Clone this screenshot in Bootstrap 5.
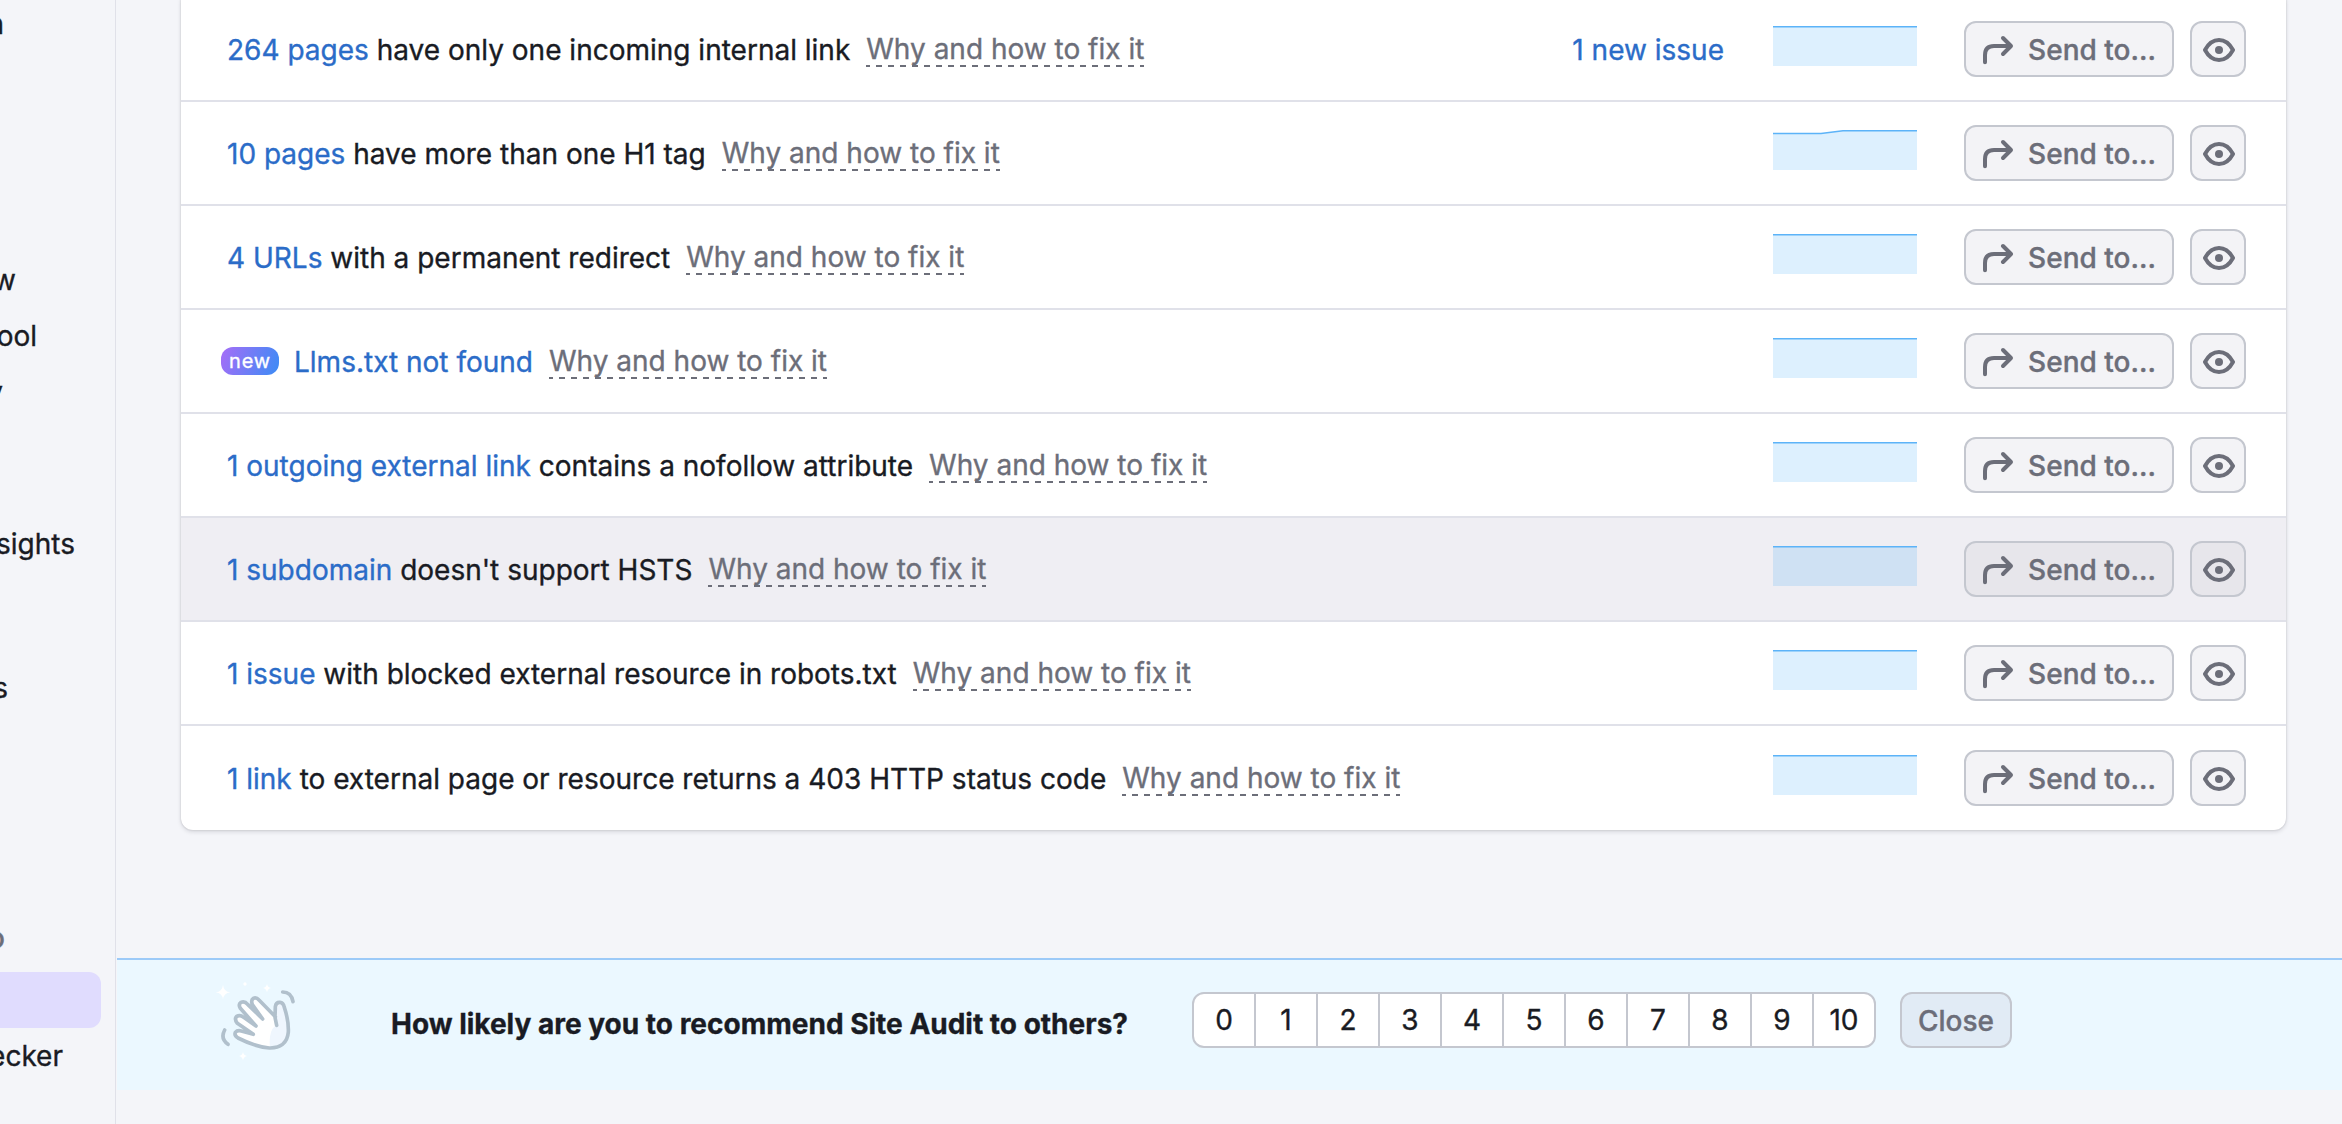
<!DOCTYPE html>
<html lang="en">
<head>
<meta charset="utf-8">
<meta name="viewport" content="width=device-width, initial-scale=1">
<title>Site Audit</title>
<link href="https://cdn.jsdelivr.net/npm/bootstrap@5.3.0/dist/css/bootstrap.min.css" rel="stylesheet">
<style>
  body { font-family: Inter, "Liberation Sans", sans-serif; font-size: 28px; line-height: 40px; color: #191b23; background: #f4f5f9; height: 1124px; overflow: hidden; -webkit-text-stroke: .35px currentColor; }
  .side-nav { width: 116px; height: 1124px; border-right: 1px solid #e0e1e9; padding-top: 0; }
  .side-item { height: 56px; display: flex; align-items: center; justify-content: flex-end; white-space: nowrap; }
  .side-item.n1 { width: 4px; margin-top: -4px; }
  .side-item.n2 { width: 16px; margin-top: 200px; }
  .side-item.n3 { width: 37px; }
  .side-item.n4 { width: 3px; }
  .side-item.n5 { width: 75px; margin-top: 96px; }
  .side-item.n6 { width: 8px; margin-top: 88px; }
  .side-item.n7 { width: 5px; margin-top: 194px; color: #6c6e79; font-weight: 500; }
  .side-item.n8 { width: 101px; margin-top: 6px; background: #e0dcfe; border-radius: 0 12px 12px 0; }
  .side-item.n9 { width: 63px; }
  .issue-card { width: 2105px; height: 832px; margin: -2px 0 0 65px; background: #fff; border-radius: 0 0 12px 12px; box-shadow: 0 0 2px rgba(25,27,35,.2), 0 2px 4px rgba(25,27,35,.13); overflow: hidden; }
  .issue-row { height: 104px; padding: 0 40px 0 46px; border-bottom: 2px solid #e0e1e9; }
  .issue-row:last-child { border-bottom: 0; }
  .issue-row.hovered { background: #efeef3; }
  .issue-row a { color: #2b6cc8; text-decoration: none; }
  .issue-text { white-space: nowrap; padding-top: 1px; }
  .why { color: #6c6e79; line-height: 32px; padding-bottom: 2px; margin-left: 16px; position: relative; top: -1px; display: inline-block; background: repeating-linear-gradient(90deg, #6c6e79 0 4px, transparent 4px 10px, #6c6e79 10px 12px) bottom / 100% 2px no-repeat; }
  .tag-new { width: 58px; height: 28px; border-radius: 12px; margin: 0 15px 0 -6px; background: linear-gradient(110deg, #a66df7, #3b8cf5); color: #fff; font-size: 20px; line-height: 28px; letter-spacing: .8px; }
  .spark { width: 144px; height: 40px; margin: 0 47px 6px 49px; }
  .tool-btn { height: 56px; border: 2px solid #c4c7cf; border-radius: 12px; background: #f3f3f6; color: #6c6e79; font-size: 28px; font-weight: 500; line-height: 40px; padding: 1px 0 0; }
  .hovered .tool-btn { background: #e7e6eb; }
  .send-btn { width: 210px; }
  .send-btn svg { margin-top: -1px; }
  .send-btn span { padding-left: 6px; }
  .eye-btn { width: 56px; margin-left: 16px; padding-left: 2px; }
  .survey { height: 132px; margin: 128px 0 0 1px; background: #ebf8ff; border-top: 2px solid #9ccaf8; padding: 0 0 0 95px; }
  .wave { width: 88px; height: 84px; margin-top: 18px; }
  .question { width: 801px; margin: 44px 0 0 91px; font-weight: 700; white-space: nowrap; }
  .scale { margin-top: 32px; height: 56px; }
  .scale .btn { width: 64px; height: 56px; padding: 1px 0 0; border: 2px solid #c4c7cf; background: #fff; color: #191b23; font-size: 28px; line-height: 51px; border-radius: 12px; }
  .scale .btn + .btn { margin-left: -2px !important; }
  .close-btn { width: 112px; margin: 32px 0 0 24px; background: #e1ebf5; }
</style>
<script src="https://cdn.jsdelivr.net/npm/bootstrap@5.3.0/dist/js/bootstrap.bundle.min.js"></script>
</head>
<body>
<svg class="d-none" xmlns="http://www.w3.org/2000/svg">
  <symbol id="arrow" viewBox="0 0 32 32"><path d="M3 29.3V22Q3 13 12 13H28.500M21 5l8 8-8 8" fill="none" stroke="#6c6e79" stroke-width="4" stroke-linecap="round" stroke-linejoin="round"/></symbol>
  <symbol id="eye" viewBox="0 0 32 32"><path d="M2 16C5.500 9.500 10.500 6 16 6S26.500 9.500 30 16C26.500 22.500 21.500 26 16 26S5.500 22.500 2 16Z" fill="none" stroke="#6c6e79" stroke-width="4" stroke-linejoin="round"/><circle cx="16" cy="16" r="4" fill="#6c6e79"/></symbol>
  <symbol id="flat" viewBox="0 0 144 40"><path d="M0 1H144V40H0Z" fill="#008ff8" fill-opacity=".135"/><path d="M0 .8H144" stroke="#5cb3f8" stroke-width="1.600"/></symbol>
  <symbol id="step" viewBox="0 0 144 40"><path d="M0 3.500H48L70 1H144V40H0Z" fill="#008ff8" fill-opacity=".135"/><path d="M0 3.500H48L70 .8H144" fill="none" stroke="#5cb3f8" stroke-width="1.600"/></symbol>
</svg>
<div class="d-flex">
  <nav class="side-nav flex-shrink-0 overflow-hidden">
    <div class="side-item n1">n</div>
    <div class="side-item n2">w</div>
    <div class="side-item n3">ool</div>
    <div class="side-item n4">y</div>
    <div class="side-item n5">sights</div>
    <div class="side-item n6">s</div>
    <div class="side-item n7">o</div>
    <div class="side-item n8"></div>
    <div class="side-item n9">ecker</div>
  </nav>
  <main class="flex-grow-1">
    <div class="issue-card">
      <div class="issue-row d-flex align-items-center">
        <div class="issue-text flex-grow-1"><a href="#">264 pages</a> have only one incoming internal link<span class="why">Why and how to fix it</span></div>
        <a href="#" class="issue-text">1 new issue</a>
        <svg class="spark"><use href="#flat"/></svg>
        <button class="btn tool-btn send-btn d-flex align-items-center justify-content-center gap-2"><svg width="32" height="32"><use href="#arrow"/></svg><span>Send to...</span></button>
        <button class="btn tool-btn eye-btn d-flex align-items-center justify-content-center"><svg width="32" height="32"><use href="#eye"/></svg></button>
      </div>
      <div class="issue-row d-flex align-items-center">
        <div class="issue-text flex-grow-1"><a href="#">10 pages</a> have more than one H1 tag<span class="why">Why and how to fix it</span></div>
        <svg class="spark"><use href="#step"/></svg>
        <button class="btn tool-btn send-btn d-flex align-items-center justify-content-center gap-2"><svg width="32" height="32"><use href="#arrow"/></svg><span>Send to...</span></button>
        <button class="btn tool-btn eye-btn d-flex align-items-center justify-content-center"><svg width="32" height="32"><use href="#eye"/></svg></button>
      </div>
      <div class="issue-row d-flex align-items-center">
        <div class="issue-text flex-grow-1"><a href="#">4 URLs</a> with a permanent redirect<span class="why">Why and how to fix it</span></div>
        <svg class="spark"><use href="#flat"/></svg>
        <button class="btn tool-btn send-btn d-flex align-items-center justify-content-center gap-2"><svg width="32" height="32"><use href="#arrow"/></svg><span>Send to...</span></button>
        <button class="btn tool-btn eye-btn d-flex align-items-center justify-content-center"><svg width="32" height="32"><use href="#eye"/></svg></button>
      </div>
      <div class="issue-row d-flex align-items-center">
        <span class="tag-new text-center">new</span>
        <div class="issue-text flex-grow-1"><a href="#">Llms.txt not found</a><span class="why">Why and how to fix it</span></div>
        <svg class="spark"><use href="#flat"/></svg>
        <button class="btn tool-btn send-btn d-flex align-items-center justify-content-center gap-2"><svg width="32" height="32"><use href="#arrow"/></svg><span>Send to...</span></button>
        <button class="btn tool-btn eye-btn d-flex align-items-center justify-content-center"><svg width="32" height="32"><use href="#eye"/></svg></button>
      </div>
      <div class="issue-row d-flex align-items-center">
        <div class="issue-text flex-grow-1"><a href="#">1 outgoing external link</a> contains a nofollow attribute<span class="why">Why and how to fix it</span></div>
        <svg class="spark"><use href="#flat"/></svg>
        <button class="btn tool-btn send-btn d-flex align-items-center justify-content-center gap-2"><svg width="32" height="32"><use href="#arrow"/></svg><span>Send to...</span></button>
        <button class="btn tool-btn eye-btn d-flex align-items-center justify-content-center"><svg width="32" height="32"><use href="#eye"/></svg></button>
      </div>
      <div class="issue-row hovered d-flex align-items-center">
        <div class="issue-text flex-grow-1"><a href="#">1 subdomain</a> doesn't support HSTS<span class="why">Why and how to fix it</span></div>
        <svg class="spark"><use href="#flat"/></svg>
        <button class="btn tool-btn send-btn d-flex align-items-center justify-content-center gap-2"><svg width="32" height="32"><use href="#arrow"/></svg><span>Send to...</span></button>
        <button class="btn tool-btn eye-btn d-flex align-items-center justify-content-center"><svg width="32" height="32"><use href="#eye"/></svg></button>
      </div>
      <div class="issue-row d-flex align-items-center">
        <div class="issue-text flex-grow-1"><a href="#">1 issue</a> with blocked external resource in robots.txt<span class="why">Why and how to fix it</span></div>
        <svg class="spark"><use href="#flat"/></svg>
        <button class="btn tool-btn send-btn d-flex align-items-center justify-content-center gap-2"><svg width="32" height="32"><use href="#arrow"/></svg><span>Send to...</span></button>
        <button class="btn tool-btn eye-btn d-flex align-items-center justify-content-center"><svg width="32" height="32"><use href="#eye"/></svg></button>
      </div>
      <div class="issue-row d-flex align-items-center">
        <div class="issue-text flex-grow-1"><a href="#">1 link</a> to external page or resource returns a 403 HTTP status code<span class="why">Why and how to fix it</span></div>
        <svg class="spark"><use href="#flat"/></svg>
        <button class="btn tool-btn send-btn d-flex align-items-center justify-content-center gap-2"><svg width="32" height="32"><use href="#arrow"/></svg><span>Send to...</span></button>
        <button class="btn tool-btn eye-btn d-flex align-items-center justify-content-center"><svg width="32" height="32"><use href="#eye"/></svg></button>
      </div>
    </div>
    <section class="survey d-flex align-items-start">
      <svg class="wave flex-shrink-0" viewBox="0 0 264 252">
        <path d="M194 142L189 118L190 86Q192 72 204 73Q214 74 217 88C225 112 230 138 229 162C226 196 204 211 172 210C140 208 112 197 78 180Q66 173 70 163Q76 156 88 159L124 169L76 136Q66 123 74 115Q84 109 95 118L132 144L85 91Q78 79 87 73Q98 68 107 79L152 123L121 80Q116 66 124 61Q133 57 141 66L190 116" fill="#fff"/>
        <path d="M194 142Q178 148 174 176Q172 192 174 208Q204 209 220 190Q230 172 228 148L217 88Q204 66 194 92Z" fill="#eff6fe"/>
        <path d="M194 142L189 118L190 86Q192 72 204 73Q214 74 217 88C225 112 230 138 229 162C226 196 204 211 172 210C140 208 112 197 78 180Q66 173 70 163Q76 156 88 159L124 169L76 136Q66 123 74 115Q84 109 95 118L132 144L85 91Q78 79 87 73Q98 68 107 79L152 123L121 80Q116 66 124 61Q133 57 141 66L190 116M212 42Q238 42 243 71M38 156Q24 182 48 199" fill="none" stroke="#b1c0cc" stroke-width="11" stroke-linecap="round" stroke-linejoin="round"/>
        <path d="M33 20Q35 41 55 43Q35 45 33 65Q31 45 11 43Q31 41 33 20ZM165 18Q167 28 177 30Q167 32 165 43Q163 32 153 30Q163 28 165 18ZM93 222Q95 232 105 234Q95 236 93 247Q91 236 81 234Q91 232 93 222Z" fill="#fff"/>
        <circle cx="99" cy="18" r="5" fill="#fff"/>
      </svg>
      <div class="question">How likely are you to recommend Site Audit to others?</div>
      <div class="scale btn-group flex-shrink-0">
        <button class="btn">0</button><button class="btn">1</button><button class="btn">2</button><button class="btn">3</button><button class="btn">4</button><button class="btn">5</button><button class="btn">6</button><button class="btn">7</button><button class="btn">8</button><button class="btn">9</button><button class="btn">10</button>
      </div>
      <button class="btn tool-btn close-btn flex-shrink-0">Close</button>
    </section>
  </main>
</div>
</body>
</html>
